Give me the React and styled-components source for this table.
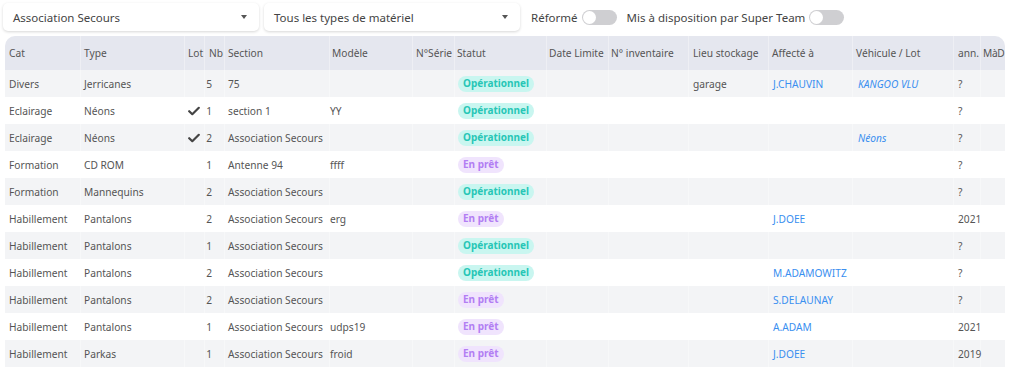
import React from "react";
import styled, { createGlobalStyle } from "styled-components";

const GlobalStyle = createGlobalStyle`
  body {
    margin: 0;
    background: #fff;
    font-family: "Segoe UI", "Noto Sans", "Open Sans", sans-serif;
    color: #555;
  }
`;

const COLS = "76px 104px 20px 20px 105px 83px 42px 92px 62px 80px 80px 84px 101px 27px 24px";

const Page = styled.div`
  padding: 3px 19px 0 3px;
`;

const Toolbar = styled.div`
  display: flex;
  align-items: center;
  gap: 5px;
  height: 28px;
`;

const Select = styled.div`
  width: 256px;
  height: 28px;
  box-sizing: border-box;
  padding: 0 10px;
  display: flex;
  align-items: center;
  justify-content: space-between;
  background: #fff;
  border-radius: 5px;
  box-shadow: 0 1px 3px rgba(0, 0, 0, 0.16);
  font-size: 11.5px;
  color: #444;
`;

const Caret = styled.span`
  width: 0;
  height: 0;
  border-left: 3.5px solid transparent;
  border-right: 3.5px solid transparent;
  border-top: 4px solid #555;
  margin-right: 2px;
`;

const ToggleLabel = styled.label`
  display: flex;
  align-items: center;
  gap: 4px;
  font-size: 11.5px;
  color: #444;
  margin-left: ${(p) => p.$ml || 0}px;
`;

const Track = styled.span`
  width: 35px;
  height: 15px;
  border-radius: 8px;
  background: #cfcfd2;
  display: flex;
  align-items: center;
  padding: 0 1px;
  box-sizing: border-box;
  &::before {
    content: "";
    width: 13px;
    height: 13px;
    border-radius: 50%;
    background: #fff;
  }
`;

const Table = styled.div`
  margin: 5px 0 0 2px;
  width: 1000px;
  font-size: 10.2px;
`;

const HeadRow = styled.div`
  display: grid;
  grid-template-columns: ${COLS};
  height: 34px;
  background: #e5e7ef;
  border-radius: 10px 10px 0 0;
  color: #555;
`;

const Row = styled.div`
  display: grid;
  grid-template-columns: ${COLS};
  height: 27px;
  background: ${(p) => (p.$odd ? "#f3f4f6" : "#fff")};
`;

const Cell = styled.div`
  display: flex;
  align-items: center;
  justify-content: ${(p) => (p.$right ? "flex-end" : "flex-start")};
  padding: ${(p) => (p.$right ? "0 12px 0 0" : "0 0 0 3px")};
  border-right: 1px solid rgba(255, 255, 255, 0.35);
  white-space: nowrap;
  overflow: visible;
  min-width: 0;
  &:last-child {
    border-right: none;
  }
`;

const HeadCell = styled(Cell)`
  padding-left: ${(p) => p.$pl ?? 3}px;
  letter-spacing: ${(p) => (p.$tight ? "-0.3px" : "normal")};
`;

const Badge = styled.span`
  display: inline-block;
  padding: 1px 5px 2px;
  border-radius: 9px;
  font-weight: 700;
  font-size: 10px;
  line-height: 13px;
  color: ${(p) => (p.$loan ? "#b27ef3" : "#27c6b6")};
  background: ${(p) => (p.$loan ? "#f0e4fd" : "#c9f6f0")};
`;

const Link = styled.span`
  color: #3a8ff0;
  font-style: ${(p) => (p.$italic ? "italic" : "normal")};
`;

const Check = () => (
  <svg width="12" height="10" viewBox="0 0 12 10">
    <path d="M1.2 5.2 L4.3 8.2 L10.8 1.8" fill="none" stroke="#444" strokeWidth="2.2" strokeLinecap="round" strokeLinejoin="round" />
  </svg>
);

const headers = [
  ["Cat", 4], ["Type", 3], ["Lot", 3], ["Nb", 4], ["Section", 3], ["Modèle", 2],
  ["N°Série", 3], ["Statut", 2], ["Date Limite", 2], ["N° inventaire", 2],
  ["Lieu stockage", 4], ["Affecté à", 3], ["Véhicule / Lot", 3], ["ann.", 4], ["MàD", 2],
];

const rows = [
  { cat: "Divers", type: "Jerricanes", nb: 5, section: "75", statut: "op", lieu: "garage", affecte: "J.CHAUVIN", vehicule: "KANGOO VLU", ann: "?" },
  { cat: "Eclairage", type: "Néons", lot: true, nb: 1, section: "section 1", modele: "YY", statut: "op", ann: "?" },
  { cat: "Eclairage", type: "Néons", lot: true, nb: 2, section: "Association Secours", statut: "op", vehicule: "Néons", ann: "?" },
  { cat: "Formation", type: "CD ROM", nb: 1, section: "Antenne 94", modele: "ffff", statut: "pret", ann: "?" },
  { cat: "Formation", type: "Mannequins", nb: 2, section: "Association Secours", statut: "op", ann: "?" },
  { cat: "Habillement", type: "Pantalons", nb: 2, section: "Association Secours", modele: "erg", statut: "pret", affecte: "J.DOEE", ann: "2021" },
  { cat: "Habillement", type: "Pantalons", nb: 1, section: "Association Secours", statut: "op", ann: "?" },
  { cat: "Habillement", type: "Pantalons", nb: 2, section: "Association Secours", statut: "op", affecte: "M.ADAMOWITZ", ann: "?" },
  { cat: "Habillement", type: "Pantalons", nb: 2, section: "Association Secours", statut: "pret", affecte: "S.DELAUNAY", ann: "?" },
  { cat: "Habillement", type: "Pantalons", nb: 1, section: "Association Secours", modele: "udps19", statut: "pret", affecte: "A.ADAM", ann: "2021" },
  { cat: "Habillement", type: "Parkas", nb: 1, section: "Association Secours", modele: "froid", statut: "pret", affecte: "J.DOEE", ann: "2019" },
];

export default function App() {
  return (
    <Page>
      <GlobalStyle />
      <Toolbar>
        <Select>
          Association Secours
          <Caret />
        </Select>
        <Select>
          Tous les types de matériel
          <Caret />
        </Select>
        <ToggleLabel $ml={6}>
          Réformé
          <Track />
        </ToggleLabel>
        <ToggleLabel $ml={5}>
          Mis à disposition par Super Team
          <Track />
        </ToggleLabel>
      </Toolbar>
      <Table>
        <HeadRow>
          {headers.map(([h, pl]) => (
            <HeadCell key={h} $pl={pl} $tight={h === "MàD"}>{h}</HeadCell>
          ))}
        </HeadRow>
        {rows.map((r, i) => (
          <Row key={i} $odd={i % 2 === 0}>
            <Cell style={{ paddingLeft: 4 }}>{r.cat}</Cell>
            <Cell>{r.type}</Cell>
            <Cell>{r.lot && <Check />}</Cell>
            <Cell $right>{r.nb}</Cell>
            <Cell>{r.section}</Cell>
            <Cell style={{ paddingLeft: 0 }}>{r.modele}</Cell>
            <Cell />
            <Cell>
              {r.statut === "op" ? <Badge>Opérationnel</Badge> : <Badge $loan>En prêt</Badge>}
            </Cell>
            <Cell />
            <Cell />
            <Cell style={{ paddingLeft: 4 }}>{r.lieu}</Cell>
            <Cell style={{ paddingLeft: 4 }}>{r.affecte && <Link>{r.affecte}</Link>}</Cell>
            <Cell style={{ paddingLeft: 5 }}>{r.vehicule && <Link $italic>{r.vehicule}</Link>}</Cell>
            <Cell style={{ paddingLeft: 4 }}>{r.ann}</Cell>
            <Cell />
          </Row>
        ))}
      </Table>
    </Page>
  );
}
